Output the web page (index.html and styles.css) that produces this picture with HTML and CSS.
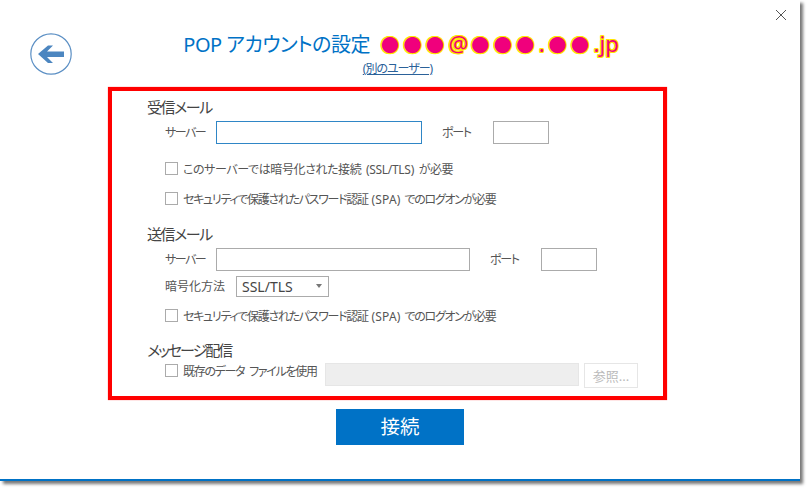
FILE: index.html
```html
<!DOCTYPE html>
<html lang="ja">
<head>
<meta charset="utf-8">
<title>POP アカウントの設定</title>
<link rel="stylesheet" href="styles.css">
</head>
<body>
<div class="window">
  <button class="close" aria-label="閉じる">
    <svg width="12" height="12" viewBox="0 0 12 12"><path d="M1 1 L11 11 M11 1 L1 11" fill="none" stroke="#555" stroke-width="1"/></svg>
  </button>
  <header class="header">
    <button class="back" aria-label="戻る">
      <svg width="42" height="42" viewBox="0 0 42 42">
        <circle cx="21" cy="21" r="20.2" fill="#fff" stroke="#5b8fc4" stroke-width="1.2"/>
        <path d="M8 21 L18 12.5 H23 L17 18.5 H34 V24 H17 L23 30 H18 Z" fill="#4c86c0"/>
      </svg>
    </button>
    <div class="heading">
      <h1 class="title">POP アカウントの設定<span class="email"><span class="dots">●●●</span>@<span class="dots after-at">●●●</span><span class="dot">.</span><span class="dots">●●</span>.jp</span></h1>
      <a class="other" href="#">(別のユーザー)</a>
    </div>
  </header>
  <main class="frame">
    <h2 class="section first">受信メール</h2>
    <div class="row">
      <label class="label">サーバー</label>
      <input class="field focus w206" type="text">
      <label class="label port">ポート</label>
      <input class="field w56" type="text">
    </div>
    <label class="check c1"><input type="checkbox"><span class="t-ssl">このサーバーでは暗号化された接続 <span class="latin-ssl">(SSL/TLS)</span> が必要</span></label>
    <label class="check c2"><input type="checkbox"><span class="t-spa">セキュリティで保護されたパスワード認証 <span class="latin">(SPA)</span> でのログオンが必要</span></label>

    <h2 class="section second">送信メール</h2>
    <div class="row">
      <label class="label">サーバー</label>
      <input class="field w254" type="text">
      <label class="label port">ポート</label>
      <input class="field w56" type="text">
    </div>
    <div class="row enc">
      <label class="label">暗号化方法</label>
      <div class="select">SSL/TLS</div>
    </div>
    <label class="check c3"><input type="checkbox"><span class="t-spa">セキュリティで保護されたパスワード認証 <span class="latin">(SPA)</span> でのログオンが必要</span></label>

    <h2 class="section third">メッセージ配信</h2>
    <div class="row data">
      <label class="check c4"><input type="checkbox"><span class="t-data">既存のデータ ファイルを使用</span></label>
      <input class="field disabled w254" type="text" disabled>
      <button class="browse" disabled>参照...</button>
    </div>
  </main>
  <button class="connect">接続</button>
</div>
</body>
</html>
```
FILE: styles.css
```css
* { box-sizing: border-box; }
html, body { margin: 0; padding: 0; background: #fff; }
body { min-height: 488px; font-family: "Noto Sans", "Noto Sans CJK JP", sans-serif; font-feature-settings: "palt"; color: #555; }
.window {
  position: relative;
  width: 800px;
  height: 481px;
  background: #fff;
  border-bottom: 2px solid #0072c6;
  box-shadow: 3px 3px 3px #777;
}
.close { position: absolute; top: 9px; right: 13px; width: 12px; height: 12px; padding: 0; border: 0; background: none; line-height: 0; }
.header { display: flex; height: 87px; padding: 33px 0 0 30px; }
.back { width: 42px; height: 42px; padding: 0; border: 0; background: none; line-height: 0; flex: none; }
.heading { width: 656px; display: flex; flex-direction: column; align-items: center; }
.title { margin: -6px 0 0; padding-left: 2px; height: 34px; font-size: 20px; line-height: 32px; font-weight: 400; color: #0072c6; white-space: nowrap; letter-spacing: -0.5px; }
.email {
  margin-left: 11px;
  font-family: "Noto Sans", "Noto Sans CJK JP", sans-serif;
  font-feature-settings: normal;
  font-size: 22px;
  letter-spacing: 0;
  color: #f0007c;
  text-shadow: 1px 0 0 #ffe600, -1px 0 0 #ffe600, 0 1px 0 #ffe600, 0 -1px 0 #ffe600, 1px 1px 0 #ffe600, -1px -1px 0 #ffe600, 1px -1px 0 #ffe600, -1px 1px 0 #ffe600;
}
.dots { font-size: 18px; letter-spacing: 4.5px; }
.after-at { margin-left: 3px; }
.dot { margin: 0 4px 0 0; }
.other { margin-right: 5px; font-size: 12px; line-height: 16px; color: #2b6199; letter-spacing: -1px; }
.frame {
  width: 559px;
  height: 313px;
  margin-left: 108px;
  border: 4px solid #f00;
  padding-left: 35px;
  box-shadow: 0 0 1px #f66;
}
.section { margin: 0; font-size: 15px; line-height: 20px; font-weight: 400; color: #444; letter-spacing: -1.4px; }
.section.first { padding-top: 6px; height: 30px; }
.section.second { margin-top: 19px; height: 24px; }
.section.third { margin-top: 18px; height: 23px; letter-spacing: -2px; }
.row { display: flex; align-items: center; height: 23px; margin-left: 18px; }
.label { flex: none; width: 51px; font-size: 12px; line-height: 16px; letter-spacing: -1.5px; }
.label.port { margin-left: 20px; width: 51px; letter-spacing: -1.3px; }
.field { flex: none; height: 23px; padding: 0 4px; border: 1px solid #ababab; background: #fff; outline: none; }
.focus { border-color: #2f86c6; }
.w206 { width: 206px; }
.w254 { width: 254px; }
.w56 { width: 56px; }
.disabled { background: #eee; border-color: #e6e6e6; }
.enc { margin-top: 5px; height: 21px; }
.enc .label { width: 71px; letter-spacing: 0; }
.select { position: relative; width: 93px; height: 21px; padding-left: 5px; border: 1px solid #ababab; font-feature-settings: normal; font-size: 14px; line-height: 19px; color: #444; }
.select::after { content: ""; position: absolute; right: 6px; top: 7px; border-left: 3.5px solid transparent; border-right: 3.5px solid transparent; border-top: 4px solid #777; }
.check { display: flex; align-items: center; height: 13px; margin-left: 18px; font-size: 12px; line-height: 16px; white-space: nowrap; }
.check input { appearance: none; flex: none; width: 13px; height: 13px; margin: 0 5px 0 0; border: 1px solid #ababab; background: #fff; }
.check > span { padding-top: 2px; }
.latin { letter-spacing: 0.2px; }
.latin-ssl { letter-spacing: -0.3px; }
.t-ssl { letter-spacing: -0.4px; word-spacing: 2px; }
.t-spa { letter-spacing: -1.3px; word-spacing: 2px; }
.t-data { letter-spacing: -1.3px; word-spacing: 3px; }
.c1 { margin-top: 18px; }
.c2 { margin-top: 17px; }
.c3 { margin-top: 12px; }
.data { align-items: flex-start; height: 25px; margin-top: 0; }
.c4 { margin: 1px 9px 0 0; width: 151px; flex: none; }
.browse { flex: none; width: 54px; height: 25px; margin-left: 5px; padding: 0; border: 1px solid #e6e6e6; background: #fff; color: #bbb; font-family: inherit; font-size: 13px; }
.connect { display: block; width: 128px; height: 36px; margin: 9px 0 0 336px; padding: 0; border: 0; background: #0072c6; color: #fff; font-family: inherit; font-size: 19.5px; line-height: 32px; }
```
